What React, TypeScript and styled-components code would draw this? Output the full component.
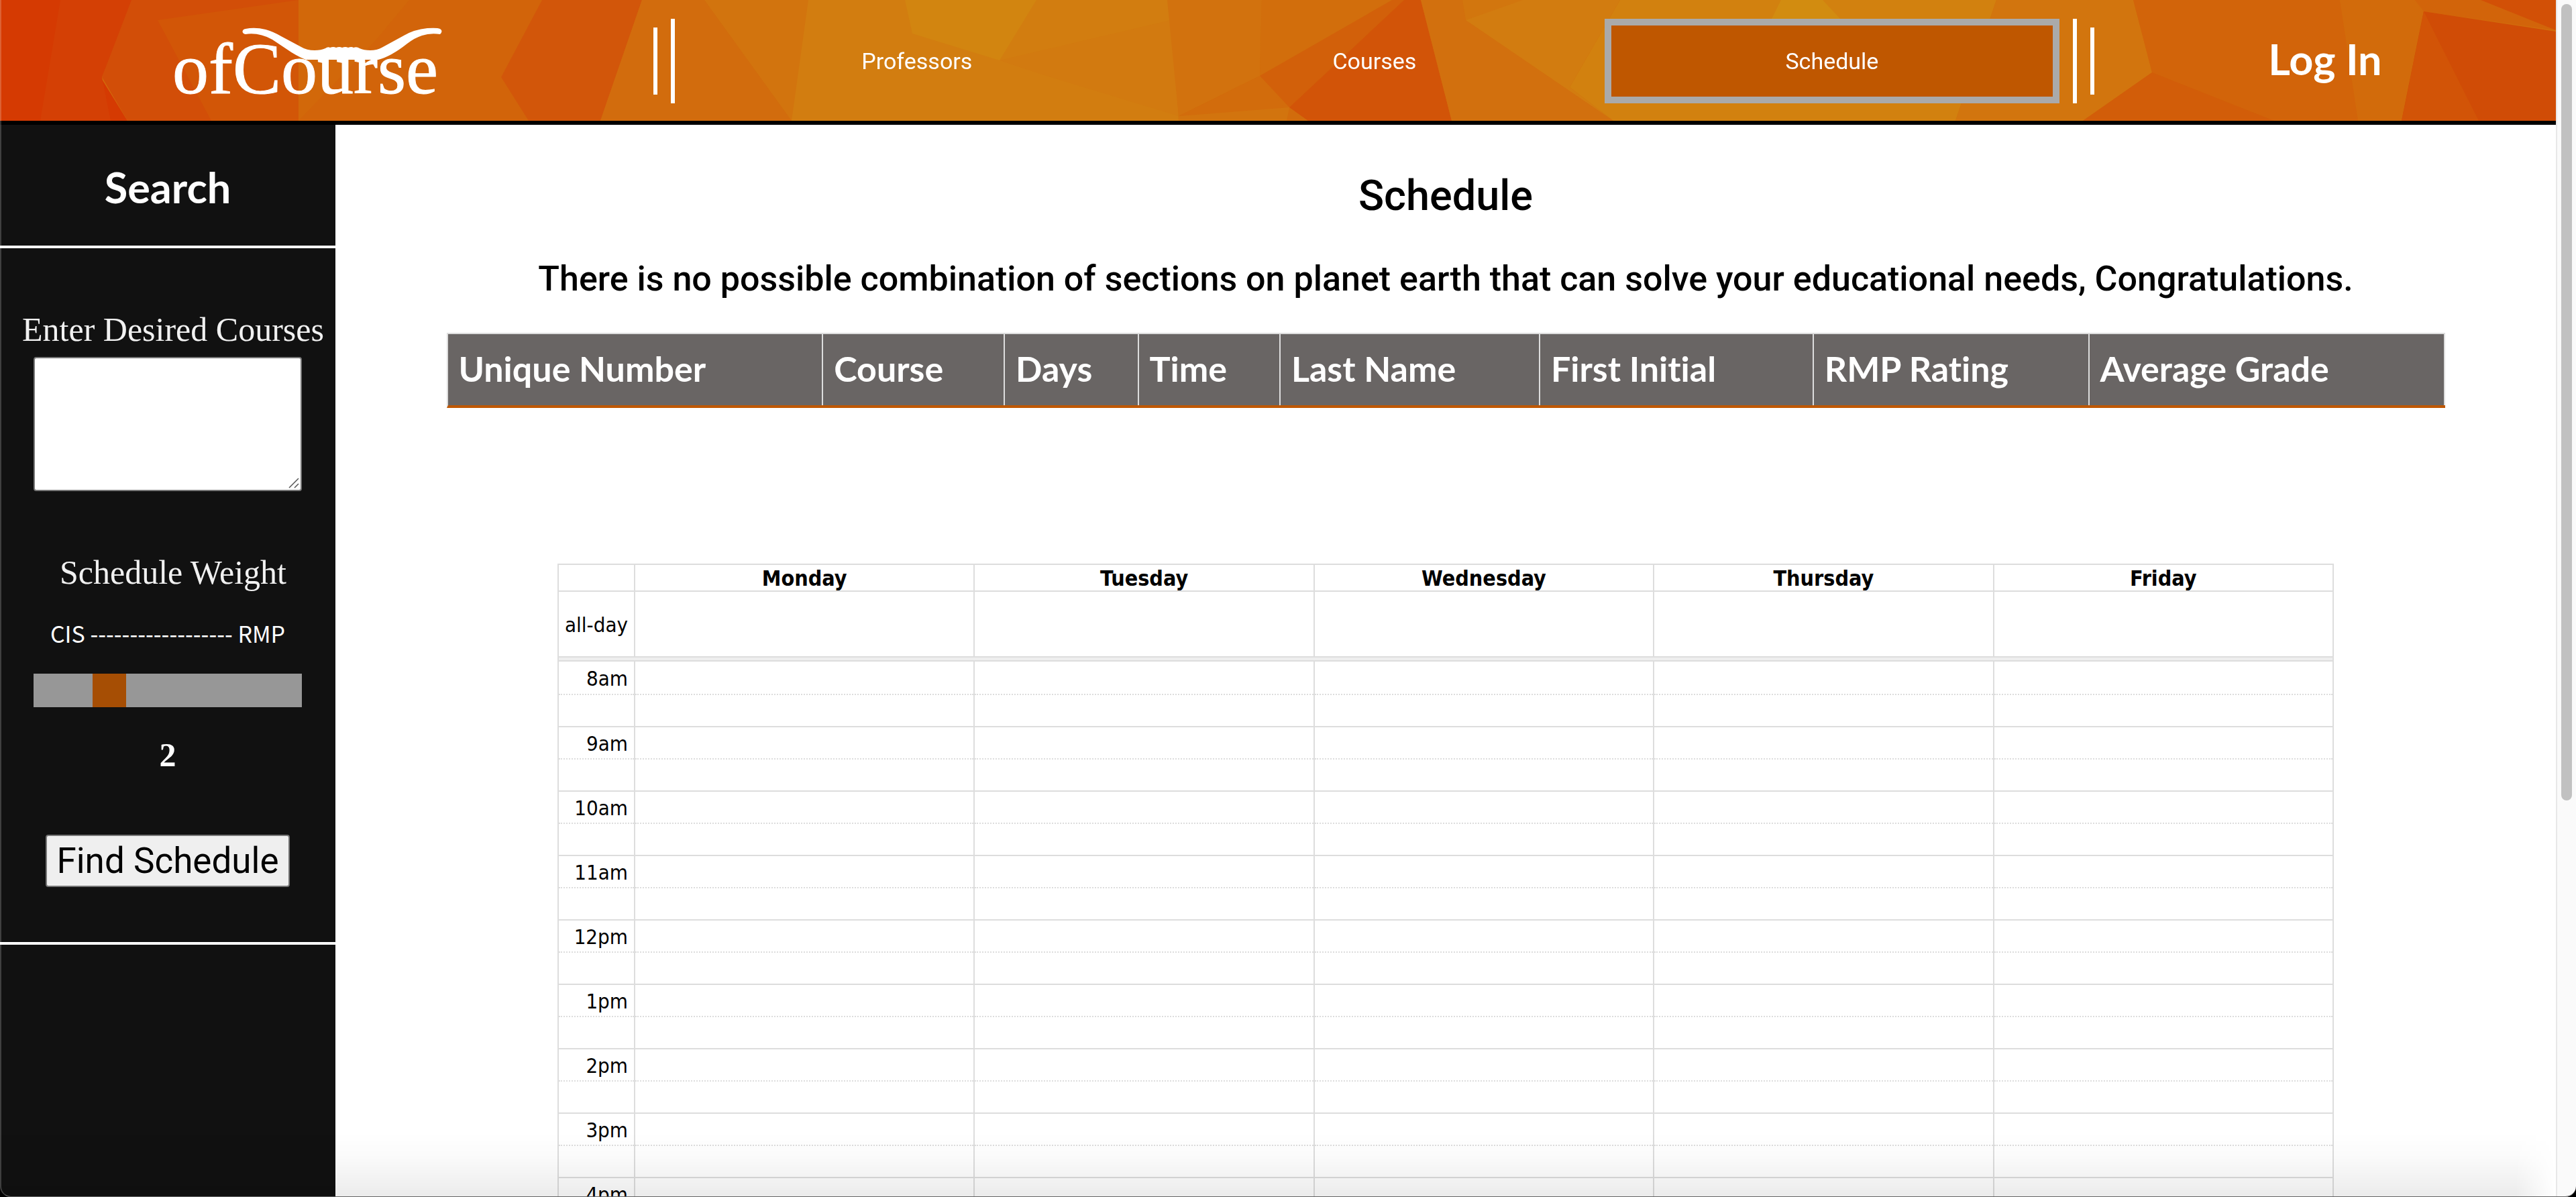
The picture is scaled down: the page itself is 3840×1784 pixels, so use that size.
import React, { useState } from "react";
import styled, { createGlobalStyle } from "styled-components";

const ORANGE = "#bf5700";
const LINE = "#dddddd";
const BODY = `Roboto, "Liberation Sans", sans-serif`;
const HEADING = `Lato, "Open Sans", sans-serif`;
const SERIF = `"Liberation Serif", "Times New Roman", serif`;
const CALENDAR = `"DejaVu Sans Condensed", "DejaVu Sans", Tahoma, sans-serif`;

const GlobalStyle = createGlobalStyle`
  * { box-sizing: border-box; }
  body {
    margin: 0;
    background: #ffffff;
    color: #000000;
    font-family: ${BODY};
    font-variant-ligatures: none;
  }
`;

const Shell = styled.div`
  display: flex;
  height: 100vh;
  overflow: hidden;
`;

const Page = styled.div`
  flex: 1;
  min-width: 0;
  display: flex;
  flex-direction: column;
  overflow-y: auto;
  scrollbar-width: none;
`;

const ScrollTrack = styled.div`
  flex: none;
  width: 30px;
  padding: 6px;
  background: #fafafa;
  border-left: 2px solid #e8e8e8;
`;

const ScrollThumb = styled.div`
  width: 16px;
  height: 67%;
  border-radius: 8px;
  background: #c1c1c1;
`;

const WindowEdge = styled.div`
  position: fixed;
  inset: 0;
  pointer-events: none;
  border-left: 2px solid rgba(255, 255, 255, 0.2);
  border-bottom: 1px solid #666666;
  border-radius: 0 0 16px 16px;
  box-shadow: 0 0 0 16px #000000;
`;

const BottomShade = styled.div`
  position: fixed;
  left: 0;
  right: 30px;
  bottom: 0;
  height: 96px;
  pointer-events: none;
  background: linear-gradient(to bottom, transparent, rgba(0, 0, 0, 0.02) 40%, rgba(0, 0, 0, 0.08));
  mask-image: linear-gradient(to left, transparent, #000000 60px);
`;

/* ---------- header ---------- */

const Header = styled.header`
  flex: none;
  position: relative;
  display: flex;
  align-items: center;
  height: 186px;
  padding-top: 2px;
  border-bottom: 6px solid #000000;
  color: #ffffff;
`;

const Backdrop = styled.svg`
  position: absolute;
  inset: 0;
  z-index: -1;
  width: 100%;
  height: 100%;
`;

const Brand = styled.a`
  flex: none;
  width: 25.56%;
  display: flex;
  justify-content: center;
  padding-right: 56px;
`;

const LogoMark = styled.svg`
  width: 404px;
  height: 108px;
  overflow: visible;
  fill: #ffffff;
`;

const LogoText = styled.text`
  font: 108px ${SERIF};
  stroke: #ffffff;
  stroke-width: 1;
`;

const Bars = styled.div`
  flex: none;
  display: flex;
  align-items: center;
  gap: 20px;
`;

const Bar = styled.span<{ $tall?: boolean }>`
  width: 6px;
  height: ${(p) => (p.$tall ? 126 : 100)}px;
  background: #ffffff;
`;

const Nav = styled.nav`
  flex: 1;
  display: flex;
  gap: 4px;
  padding: 0 20px 0 22px;
`;

const NavLink = styled.a<{ $active?: boolean }>`
  flex: 1 1 0;
  display: flex;
  align-items: center;
  justify-content: center;
  height: 126px;
  border: 10px solid ${(p) => (p.$active ? "#aaaaaa" : "transparent")};
  background: ${(p) => (p.$active ? ORANGE : "transparent")};
  color: #ffffff;
  font-size: 34px;
  text-decoration: none;
`;

const LogIn = styled.button`
  flex: none;
  width: 18.06%;
  height: 126px;
  padding: 0 0 6px;
  border: 0;
  background: none;
  color: #ffffff;
  font: 700 63px/76px ${HEADING};
`;

/* ---------- sidebar ---------- */

const Columns = styled.div`
  flex: 1 0 auto;
  display: flex;
`;

const Sidebar = styled.aside`
  flex: none;
  width: 500px;
  background: #111111;
  color: #ffffff;
`;

const SidebarTitle = styled.h2`
  display: flex;
  align-items: center;
  justify-content: center;
  height: 184px;
  margin: 0;
  padding-top: 6px;
  border-bottom: 4px solid #ffffff;
  font: 700 63px/76px ${HEADING};
`;

const SearchForm = styled.form`
  display: flex;
  flex-direction: column;
  align-items: center;
  padding: 92px 0 82px;
  border-bottom: 4px solid #ffffff;
`;

const FieldLabel = styled.label`
  padding-left: 16px;
  color: #f1f1f1;
  font: 50px/58px ${SERIF};
  white-space: nowrap;
`;

const CoursesField = styled.div`
  position: relative;
  display: flex;
  width: 400px;
  margin: 12px 0 92px;
`;

const CoursesBox = styled.textarea`
  width: 100%;
  height: 200px;
  padding: 4px;
  border: 2px solid #767676;
  border-radius: 4px;
  background: #ffffff;
  font: 34px/40px ${BODY};
  resize: none;
`;

const ResizeGrip = styled.svg`
  position: absolute;
  right: 4px;
  bottom: 4px;
  width: 16px;
  height: 16px;
  stroke: #555555;
  stroke-width: 1.5;
`;

const ScaleText = styled.p`
  margin: 38px 0 36px;
  font: 34px/48px "Noto Sans CJK JP", "Noto Sans", sans-serif;
  white-space: nowrap;
`;

const WeightSlider = styled.input`
  appearance: none;
  width: 400px;
  height: 50px;
  margin: 0;
  background: #979797;

  &::-webkit-slider-thumb {
    appearance: none;
    width: 50px;
    height: 50px;
    background: #a64e04;
  }
`;

const WeightValue = styled.output`
  margin: 42px 0 90px;
  font: 700 50px/58px ${SERIF};
`;

const FindButton = styled.button`
  height: 78px;
  padding: 0 14px;
  border: 2px solid #767676;
  border-radius: 4px;
  background: #efefef;
  color: #000000;
  font: 53px/64px ${BODY};
  white-space: nowrap;
`;

/* ---------- main ---------- */

const Main = styled.main`
  flex: 1;
  min-width: 0;
  display: flex;
  flex-direction: column;
  align-items: center;
  padding-top: 70px;
  background: #ffffff;
`;

const Title = styled.h1`
  margin: 0 0 56px;
  font-size: 63px;
  line-height: 72px;
  font-weight: 500;
`;

const Message = styled.p`
  margin: 0 0 48px;
  font-size: 52px;
  line-height: 64px;
  font-weight: 500;
  text-align: center;
`;

const SectionTable = styled.table`
  width: 90%;
  margin-bottom: 232px;
  table-layout: fixed;
  border-collapse: separate;
  border-spacing: 0;
  border-top: 2px solid ${LINE};
  border-left: 2px solid ${LINE};
  border-bottom: 4px solid ${ORANGE};
`;

const SectionHead = styled.th<{ $share: string }>`
  width: ${(p) => p.$share};
  height: 106px;
  padding: 0 0 4px 16px;
  border-right: 2px solid ${LINE};
  background: #696564;
  color: #ffffff;
  font: 700 52px/64px ${HEADING};
  font-variant-ligatures: none;
  text-align: left;
  white-space: nowrap;
`;

const Calendar = styled.table`
  width: 80%;
  table-layout: fixed;
  border-collapse: collapse;
  font: 31px/36px ${CALENDAR};

  th,
  td {
    padding: 0;
    border: 2px solid ${LINE};
  }
`;

const AxisCol = styled.col`
  width: 114px;
`;

const DayRow = styled.tr`
  height: 40px;
  font-size: 32px;

  && > th {
    padding-top: 2px;
  }
`;

const AllDayRow = styled.tr`
  height: 98px;
`;

const DividerRow = styled.tr`
  height: 6px;
  background: #eeeeee;
  line-height: 0;
`;

const HourRow = styled.tr`
  height: 48px;

  ${DividerRow} + & {
    height: 50px;
  }

  && > * {
    border-bottom: 0;
  }
`;

const HalfRow = styled.tr`
  height: 48px;

  && > * {
    border-top-style: dotted;
  }
`;

const AxisCell = styled.th`
  && {
    padding: 2px 9px 0 0;
  }
  font-weight: 400;
  text-align: right;
  white-space: nowrap;
`;

const days = ["Monday", "Tuesday", "Wednesday", "Thursday", "Friday"];
const hours = ["8am", "9am", "10am", "11am", "12pm", "1pm", "2pm", "3pm", "4pm"];
const sectionColumns = [
  ["Unique Number", "18.8%"],
  ["Course", "9.1%"],
  ["Days", "6.7%"],
  ["Time", "7.1%"],
  ["Last Name", "13%"],
  ["First Initial", "13.7%"],
  ["RMP Rating", "13.8%"],
  ["Average Grade", "17.8%"],
];
const facets = [
  ["#d53a02", "0,0 210,0 150,115 190,180 0,180"],
  ["#d44005", "90,0 200,0 152,115 165,180 60,180"],
  ["#d24e08", "196,0 445,0 445,180 190,180 152,115"],
  ["#d25607", "235,30 445,0 445,180 315,180"],
  ["#d2640a", "445,0 808,0 747,115 788,180 445,180"],
  ["#d2680a", "445,0 610,0 560,60 445,180"],
  ["#d2560a", "808,0 957,0 895,180 788,180 747,115"],
  ["#d26c0d", "957,0 1050,0 1180,180 895,180"],
  ["#d2740e", "1050,0 1205,0 1205,160 1180,180"],
  ["#d27d10", "1205,0 1745,0 1757,180 1180,180"],
  ["#d28510", "1349,0 1545,0 1490,90 1360,50"],
  ["#d27a10", "1490,90 1745,30 1757,173 1550,110"],
  ["#d2720e", "1740,0 1881,0 1878,113 1757,173"],
  ["#d26e0c", "1881,0 2085,0 1878,113"],
  ["#d26c0c", "1757,173 1878,113 1915,162"],
  ["#d2740e", "1757,173 1922,160 1918,180 1757,180"],
  ["#d2600a", "2075,0 2093,0 1922,160 1878,113"],
  ["#d25408", "2093,0 2118,0 2164,180 1950,180 1922,160"],
  ["#d2700e", "2118,0 2180,0 2185,30 2405,180 2164,180"],
  ["#d2760e", "2180,0 2270,0 2300,100 2185,30"],
  ["#d27c10", "2270,0 2415,0 2340,130 2405,180 2185,30"],
  ["#d2810f", "2415,0 2976,0 2915,180 2405,180 2340,130"],
  ["#d28c10", "2655,0 2717,0 2745,30 2640,30"],
  ["#d2750e", "2976,0 3180,0 3208,108 3105,180 2915,180"],
  ["#d2640a", "3180,0 3488,0 3520,180 3105,180 3208,108"],
  ["#d25d09", "3208,108 3390,180 3105,180"],
  ["#d26b0b", "3488,0 3615,0 3613,17 3580,180 3515,180"],
  ["#d2640a", "3600,0 3700,0 3810,45 3613,17"],
  ["#d25006", "3698,0 3810,0 3810,45"],
  ["#d04c06", "3613,17 3810,47 3810,180 3580,180"],
  ["#d25407", "3613,17 3695,180 3580,180"],
];

function Logo() {
  return (
    <LogoMark viewBox="0 0 404 108" role="img" aria-label="ofCourse">
      <LogoText x="0" y="102">
        ofCourse
      </LogoText>
      <path d="M109 14C103 13 103 7 109 6Q123 3 139 7Q150 10 162 17L192 33Q200 38 212 38Q222 38 228 35Q232 32 235 34Q240 32 244 34Q249 32 253 34Q258 32 262 34Q267 32 270 34Q275 32 279 35Q285 38 295 38Q305 38 312 34L345 16Q360 7 380 5Q395 4 399 6Q404 9 399 14Q384 12 372 16Q362 19 350 28Q326 47 307 52L199 52Q184 46 170 36L149 22Q129 11 109 14Z" />
    </LogoMark>
  );
}

export default function App() {
  const [weight, setWeight] = useState(2);
  return (
    <Shell>
      <GlobalStyle />
      <Page>
        <Header>
          <Backdrop viewBox="0 0 3810 180" preserveAspectRatio="none" aria-hidden="true">
            <rect width="3810" height="180" fill="#d26c0c" />
            {facets.map(([fill, points]) => (
              <polygon key={points} fill={fill} points={points} />
            ))}
          </Backdrop>
          <Brand href="#">
            <Logo />
          </Brand>
          <Bars aria-hidden="true">
            <Bar />
            <Bar $tall />
          </Bars>
          <Nav>
            <NavLink href="#professors">Professors</NavLink>
            <NavLink href="#courses">Courses</NavLink>
            <NavLink href="#schedule" $active aria-current="page">
              Schedule
            </NavLink>
          </Nav>
          <Bars aria-hidden="true">
            <Bar $tall />
            <Bar />
          </Bars>
          <LogIn type="button">Log In</LogIn>
        </Header>
        <Columns>
          <Sidebar>
            <SidebarTitle>Search</SidebarTitle>
            <SearchForm onSubmit={(e) => e.preventDefault()}>
              <FieldLabel htmlFor="courses">Enter Desired Courses</FieldLabel>
              <CoursesField>
                <CoursesBox id="courses" />
                <ResizeGrip viewBox="0 0 16 16" aria-hidden="true">
                  <path d="M1 15L15 1M9 15L15 9" />
                </ResizeGrip>
              </CoursesField>
              <FieldLabel htmlFor="weight">Schedule Weight</FieldLabel>
              <ScaleText>CIS ------------------ RMP</ScaleText>
              <WeightSlider
                id="weight"
                type="range"
                min={0}
                max={8}
                value={weight}
                onChange={(e) => setWeight(Number(e.target.value))}
              />
              <WeightValue htmlFor="weight">{weight}</WeightValue>
              <FindButton type="submit">Find Schedule</FindButton>
            </SearchForm>
          </Sidebar>
          <Main>
            <Title>Schedule</Title>
            <Message>
              There is no possible combination of sections on planet earth that can solve your educational needs,
              Congratulations.
            </Message>
            <SectionTable>
              <thead>
                <tr>
                  {sectionColumns.map(([name, share]) => (
                    <SectionHead key={name} $share={share} scope="col">
                      {name}
                    </SectionHead>
                  ))}
                </tr>
              </thead>
            </SectionTable>
            <Calendar>
              <colgroup>
                <AxisCol />
                {days.map((day) => (
                  <col key={day} />
                ))}
              </colgroup>
              <thead>
                <DayRow>
                  <td />
                  {days.map((day) => (
                    <th key={day} scope="col">
                      {day}
                    </th>
                  ))}
                </DayRow>
              </thead>
              <tbody>
                <AllDayRow>
                  <AxisCell scope="row">all-day</AxisCell>
                  {days.map((day) => (
                    <td key={day} />
                  ))}
                </AllDayRow>
                <DividerRow>
                  <td colSpan={6} />
                </DividerRow>
                {hours.map((hour) => (
                  <React.Fragment key={hour}>
                    <HourRow>
                      <AxisCell scope="row">{hour}</AxisCell>
                      {days.map((day) => (
                        <td key={day} />
                      ))}
                    </HourRow>
                    <HalfRow>
                      <td />
                      {days.map((day) => (
                        <td key={day} />
                      ))}
                    </HalfRow>
                  </React.Fragment>
                ))}
              </tbody>
            </Calendar>
          </Main>
        </Columns>
      </Page>
      <ScrollTrack aria-hidden="true">
        <ScrollThumb />
      </ScrollTrack>
      <BottomShade />
      <WindowEdge />
    </Shell>
  );
}
